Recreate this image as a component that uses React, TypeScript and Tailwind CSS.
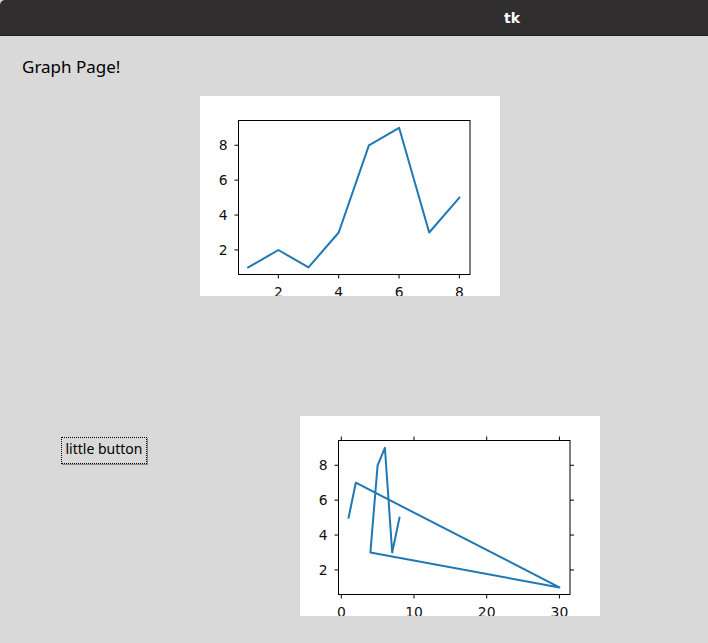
import React from "react";

const BLUE = "#1f77b4";
const LABEL = "fill-[#111] text-[13.9px] font-['DejaVu_Sans',sans-serif]";

function Y(y: number) {
  return 171.4 - (y - 1) * 17.45;
}

function Frame() {
  return <rect x={38.5} y={24.5} width={231.5} height={154} fill="none" stroke="#000" strokeWidth={1} />;
}

function Chart1() {
  const X = (x: number) => 48.2 + (x - 1) * 30.17;
  const data = [1, 2, 1, 3, 8, 9, 3, 5];
  const pts = data.map((y, i) => `${X(i + 1).toFixed(1)},${Y(y).toFixed(1)}`).join(" ");
  return (
    <svg width="300" height="200" viewBox="0 0 300 200" className="block bg-white">
      <polyline points={pts} fill="none" stroke={BLUE} strokeWidth={2} strokeLinejoin="round" strokeLinecap="square" />
      <Frame />
      {[2, 4, 6, 8].map((v) => (
        <g key={"y" + v}>
          <line x1={34.5} x2={38.5} y1={Y(v)} y2={Y(v)} stroke="#000" strokeWidth={1} />
          <text x={27.5} y={Y(v) + 5} textAnchor="end" className={LABEL}>{v}</text>
        </g>
      ))}
      {[2, 4, 6, 8].map((v) => (
        <g key={"x" + v}>
          <line x1={X(v)} x2={X(v)} y1={178.5} y2={182.5} stroke="#000" strokeWidth={1} />
          <text x={X(v)} y={200.5} textAnchor="middle" className={LABEL}>{v}</text>
        </g>
      ))}
    </svg>
  );
}

function Chart2() {
  const X = (x: number) => 41.3 + x * 7.27;
  const data: [number, number][] = [
    [1, 5], [2, 7], [30, 1], [4, 3], [5, 8], [6, 9], [7, 3], [8, 5],
  ];
  const pts = data.map(([x, y]) => `${X(x).toFixed(1)},${Y(y).toFixed(1)}`).join(" ");
  return (
    <svg width="300" height="200" viewBox="0 0 300 200" className="block bg-white">
      <polyline points={pts} fill="none" stroke={BLUE} strokeWidth={2} strokeLinejoin="round" strokeLinecap="square" />
      <Frame />
      {[2, 4, 6, 8].map((v) => (
        <g key={"y" + v}>
          <line x1={34.5} x2={38.5} y1={Y(v)} y2={Y(v)} stroke="#000" strokeWidth={1} />
          <line x1={270} x2={274} y1={Y(v)} y2={Y(v)} stroke="#000" strokeWidth={1} />
          <text x={27.5} y={Y(v) + 5} textAnchor="end" className={LABEL}>{v}</text>
        </g>
      ))}
      {[0, 10, 20, 30].map((v) => (
        <g key={"x" + v}>
          <line x1={X(v)} x2={X(v)} y1={178.5} y2={182.5} stroke="#000" strokeWidth={1} />
          <line x1={X(v)} x2={X(v)} y1={20.5} y2={24.5} stroke="#000" strokeWidth={1} />
          <text x={X(v)} y={200.5} textAnchor="middle" className={LABEL}>{v}</text>
        </g>
      ))}
    </svg>
  );
}

export default function App() {
  return (
    <div className="w-[708px] h-[643px] bg-[#d9d9d9] overflow-hidden flex flex-col font-['Noto_Sans',sans-serif]">
      <div className="h-9 shrink-0 bg-[#302e2e] border-b border-[#1c1b1b] rounded-tl-[5px] flex items-center">
        <span className="ml-[504px] text-white font-bold text-[14px] leading-none font-['DejaVu_Sans',sans-serif]">tk</span>
      </div>
      <div className="ml-[22px] mt-[21px] text-[17px] leading-[20px] text-black">Graph Page!</div>
      <div className="ml-[200px] mt-[19px]">
        <Chart1 />
      </div>
      <div className="flex items-start mt-[120px]">
        <button className="ml-[61px] mt-[21px] w-[86px] h-[27px] pb-[3px] border border-dotted border-black shadow-[1px_1px_0_#8a8a8a] bg-[#d9d9d9] text-[14px] leading-none text-black flex items-center justify-center">
          little button
        </button>
        <div className="ml-[153px]">
          <Chart2 />
        </div>
      </div>
    </div>
  );
}
